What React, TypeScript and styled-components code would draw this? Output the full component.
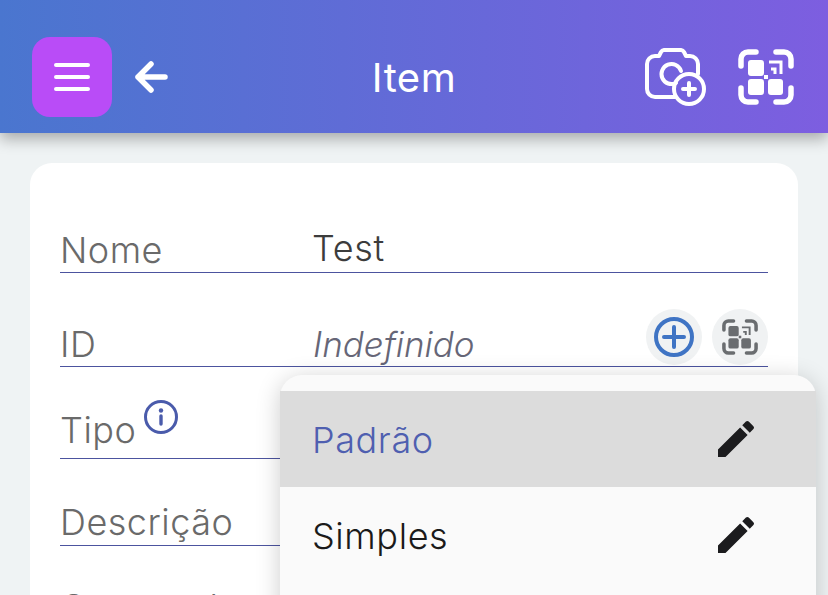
import styled, { createGlobalStyle } from "styled-components";

const GlobalStyle = createGlobalStyle`
  html, body {
    margin: 0;
    padding: 0;
    height: 100%;
    overflow: hidden;
    background: #eff3f4;
    font-family: Inter, "Noto Sans", sans-serif;
  }
`;

const MenuIcon = () => (
  <svg width="36" height="28" viewBox="0 0 36 28" fill="none" stroke="#fff" strokeWidth="4" strokeLinecap="round">
    <path d="M2 2h32M2 14h32M2 26h32" />
  </svg>
);

const BackIcon = () => (
  <svg width="34" height="34" viewBox="0 0 34 34" fill="none" stroke="#fff" strokeWidth="5.5" strokeLinecap="round" strokeLinejoin="round">
    <path d="M31 17H4M17 4 4 17l13 13" />
  </svg>
);

const CameraPlusIcon = () => (
  <svg width="62" height="60" viewBox="0 0 62 60" fill="none" stroke="#fff" strokeWidth="4" strokeLinecap="round" strokeLinejoin="round">
    <path d="M30 50H10a8 8 0 0 1-8-8V17a8 8 0 0 1 8-8h4l2-4a4 4 0 0 1 3-2h17a4 4 0 0 1 3 2l2 4h4a8 8 0 0 1 8 8v10" />
    <path d="M31 36a10 10 0 1 1 5-12" />
    <circle cx="44" cy="42" r="15" />
    <path d="M38 42h12M44 36v12" />
  </svg>
);

const ScanIcon = ({ size, color }: { size: number; color: string }) => (
  <svg width={size} height={size} viewBox="0 0 56 56" fill="none">
    <g stroke={color} strokeWidth="5.5" strokeLinecap="round" strokeLinejoin="round">
      <path d="M3 17V10a7 7 0 0 1 7-7h8M38 3h8a7 7 0 0 1 7 7v7M53 39v7a7 7 0 0 1-7 7h-8M18 53h-8a7 7 0 0 1-7-7v-7" />
    </g>
    <g fill={color}>
      <rect x="10" y="11" width="16" height="16" rx="3" />
      <rect x="10" y="30" width="16" height="16" rx="3" />
      <rect x="30" y="30" width="15" height="16" rx="3" />
      <rect x="26" y="26" width="4" height="4" />
    </g>
    <path d="M31 13h12v12" stroke={color} strokeWidth="3" fill="none" />
    <path d="M33 20h4v5" stroke={color} strokeWidth="3" fill="none" />
  </svg>
);

const PlusCircleIcon = () => (
  <svg width="40" height="40" viewBox="0 0 40 40" fill="none" stroke="#3f74c4" strokeWidth="4" strokeLinecap="round">
    <circle cx="20" cy="20" r="18" />
    <path d="M20 10v20M10 20h20" />
  </svg>
);

const InfoIcon = () => (
  <svg width="34" height="34" viewBox="0 0 34 34" fill="none" stroke="#4a5bab" strokeWidth="3" strokeLinecap="round">
    <circle cx="17" cy="17" r="15.5" />
    <path d="M17 16v8" strokeWidth="3.4" />
    <circle cx="17" cy="10.5" r="2.2" fill="#4a5bab" stroke="none" />
  </svg>
);

const PencilIcon = () => (
  <svg width="48" height="48" viewBox="0 0 24 24" fill="#1c1c1e">
    <path d="M3 17.25V21h3.75L17.81 9.94l-3.75-3.75L3 17.25zM20.71 7.04a1 1 0 0 0 0-1.41l-2.34-2.34a1 1 0 0 0-1.41 0l-1.83 1.83 3.75 3.75 1.83-1.83z" />
  </svg>
);

const FIELDS = [
  { label: "Nome", value: "Test", height: 110 },
  { label: "ID", value: "Indefinido", italic: true, height: 94 },
];

const MENU_ITEMS = [
  { label: "Padrão", selected: true },
  { label: "Simples", selected: false },
];

const App = () => {
  return (
    <Page>
      <GlobalStyle />
      <Header>
        <HeaderLeft>
          <MenuButton>
            <MenuIcon />
          </MenuButton>
          <BackIcon />
        </HeaderLeft>
        <Title>Item</Title>
        <HeaderRight>
          <CameraPlusIcon />
          <ScanIcon size={56} color="#fff" />
        </HeaderRight>
      </Header>
      <Card>
        {FIELDS.map((field) => (
          <FieldRow key={field.label} $height={field.height}>
            <FieldLabel>{field.label}</FieldLabel>
            <FieldValue $italic={field.italic}>{field.value}</FieldValue>
            {field.italic && (
              <FieldActions>
                <RoundButton>
                  <PlusCircleIcon />
                </RoundButton>
                <RoundButton>
                  <ScanIcon size={36} color="#6a6d70" />
                </RoundButton>
              </FieldActions>
            )}
          </FieldRow>
        ))}
        <FieldRow $height={92}>
          <FieldLabel $lift={6}>Tipo</FieldLabel>
          <InfoWrap>
            <InfoIcon />
          </InfoWrap>
        </FieldRow>
        <FieldRow $height={87}>
          <FieldLabel $lift={1}>Descrição</FieldLabel>
        </FieldRow>
        <NextLabel>Comprador</NextLabel>
      </Card>
      <Menu>
        {MENU_ITEMS.map((item) => (
          <MenuItem key={item.label} $selected={item.selected}>
            <span>{item.label}</span>
            <PencilIcon />
          </MenuItem>
        ))}
      </Menu>
    </Page>
  );
};

const Page = styled.div`
  position: relative;
  width: 828px;
  height: 595px;
  overflow: hidden;
  background: #eff3f4;
`;

const Header = styled.header`
  position: relative;
  display: flex;
  align-items: center;
  justify-content: space-between;
  height: 133px;
  padding: 21px 34px 0 32px;
  box-sizing: border-box;
  background: linear-gradient(90deg, #4a76cf 0%, #7d5ee0 100%);
  box-shadow: 0 6px 14px rgba(0, 0, 0, 0.3);
`;

const HeaderLeft = styled.div`
  display: flex;
  align-items: center;
  gap: 22px;
`;

const MenuButton = styled.div`
  display: flex;
  align-items: center;
  justify-content: center;
  width: 80px;
  height: 80px;
  border-radius: 18px;
  background: #b94cf7;
`;

const Title = styled.h1`
  position: absolute;
  left: 0;
  right: 0;
  margin: 0;
  text-align: center;
  font-size: 40px;
  font-weight: 400;
  letter-spacing: 0.5px;
  color: #fff;
`;

const HeaderRight = styled.div`
  display: flex;
  align-items: center;
  gap: 31px;
`;

const Card = styled.section`
  height: 500px;
  margin: 30px 30px 0;
  padding: 0 30px;
  border-radius: 22px;
  background: #fff;
`;

const FieldRow = styled.div<{ $height: number }>`
  position: relative;
  display: flex;
  align-items: flex-end;
  height: ${({ $height }) => $height}px;
  box-sizing: border-box;
  border-bottom: 1px solid #4c549f;
`;

const FieldLabel = styled.span<{ $lift?: number }>`
  width: 252px;
  padding-bottom: ${({ $lift }) => $lift ?? 0}px;
  font-size: 36px;
  font-weight: 350;
  line-height: 44px;
  letter-spacing: 0.5px;
  color: #6a6a6a;
`;

const FieldValue = styled.span<{ $italic?: boolean }>`
  margin-left: ${({ $italic }) => ($italic ? "1px" : "0")};
  font-size: ${({ $italic }) => ($italic ? "35px" : "36px")};
  font-weight: 350;
  line-height: ${({ $italic }) => ($italic ? "44px" : "48px")};
  letter-spacing: ${({ $italic }) => ($italic ? "0" : "0.7px")};
  color: ${({ $italic }) => ($italic ? "#667" : "#3c3c3c")};
  font-style: ${({ $italic }) => ($italic ? "italic" : "normal")};
`;

const FieldActions = styled.div`
  position: absolute;
  right: 0;
  bottom: 1px;
  display: flex;
  gap: 10px;
`;

const RoundButton = styled.div`
  display: flex;
  align-items: center;
  justify-content: center;
  width: 56px;
  height: 56px;
  border-radius: 50%;
  background: #f0f2f3;
`;

const InfoWrap = styled.div`
  position: absolute;
  left: 84px;
  top: 33px;
  display: flex;
`;

const NextLabel = styled.div`
  margin-top: 39px;
  font-size: 36px;
  font-weight: 350;
  line-height: 44px;
  letter-spacing: 0.5px;
  color: #6a6a6a;
`;

const Menu = styled.div`
  position: absolute;
  left: 280px;
  top: 375px;
  width: 536px;
  height: 300px;
  padding-top: 16px;
  box-sizing: border-box;
  border-radius: 22px;
  background: #fafafa;
  box-shadow: 0 4px 24px rgba(0, 0, 0, 0.2);
`;

const MenuItem = styled.div<{ $selected: boolean }>`
  display: flex;
  align-items: center;
  justify-content: space-between;
  height: 96px;
  padding: 0 56px 0 32px;
  font-size: 36px;
  font-weight: 350;
  letter-spacing: 0.6px;
  color: ${({ $selected }) => ($selected ? "#4f5fb0" : "#1a1a1a")};
  background: ${({ $selected }) => ($selected ? "#dcdcdc" : "transparent")};

  span {
    padding-top: 2px;
  }
`;

export default App;
